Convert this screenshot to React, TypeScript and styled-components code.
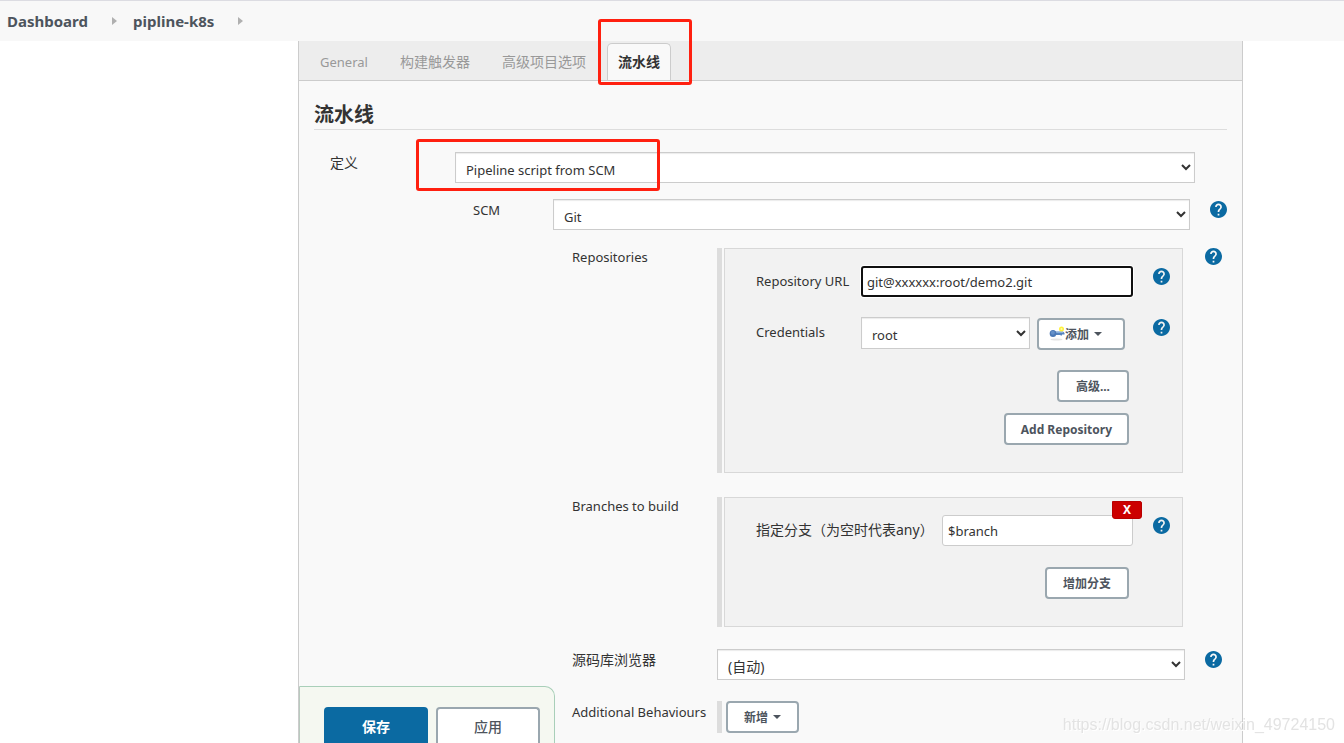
import React from "react";
import styled, { createGlobalStyle } from "styled-components";
import { MdHelp } from "react-icons/md";

const font = `"Noto Sans", "Noto Sans CJK SC", sans-serif`;

const GlobalStyle = createGlobalStyle`
  * { box-sizing: border-box; }
  body {
    margin: 0;
    background: #fff;
    color: #333;
    font: 14px/22px ${font};
  }
  button, input, select { font-family: ${font}; }
`;

const Page = styled.div`
  display: flex;
  flex-direction: column;
  min-height: 100vh;
`;

const Breadcrumbs = styled.nav`
  display: flex;
  align-items: center;
  height: 41px;
  padding-left: 7px;
  border-top: 1px solid #dcdce2;
  background: #f8f8f8;
`;

const Crumb = styled.a`
  color: #4d545d;
  font-size: 15px;
  font-weight: 700;
  text-decoration: none;
`;

const CrumbArrow = styled.svg`
  width: 5px;
  height: 8px;
  margin: 0 16px 0 24px;
  fill: #b0b0b0;
`;

const Panel = styled.main`
  flex: 1;
  margin: 0 101px 0 298px;
  border: solid #ccc;
  border-width: 0 1px;
  background: #f9f9f9;
`;

const TabBar = styled.div`
  display: flex;
  align-items: flex-end;
  gap: 10px;
  height: 40px;
  padding-left: 10px;
  border-bottom: 1px solid #ccc;
  background: #ededed;
`;

const Tab = styled.a<{ $active?: boolean; $latin?: boolean }>`
  position: relative;
  height: 37px;
  padding: 0 10px;
  border: 1px solid ${(p) => (p.$active ? "#ccc" : "transparent")};
  border-bottom: 0;
  border-radius: 5px 5px 0 0;
  background: ${(p) => (p.$active ? "#f9f9f9" : "transparent")};
  color: ${(p) => (p.$active ? "#333" : "#999")};
  font-size: ${(p) => (p.$latin ? 13 : 14)}px;
  font-weight: ${(p) => (p.$active ? 700 : 400)};
  line-height: 36px;
  text-decoration: none;
  white-space: nowrap;
`;

const Marker = styled.span<{ $inset: string }>`
  position: absolute;
  inset: ${(p) => p.$inset};
  border: 3px solid #ff2010;
  border-radius: 3px;
  pointer-events: none;
`;

const Section = styled.section`
  padding: 20px 15px 0;
`;

const Title = styled.h2`
  margin: 0 0 22px;
  border-bottom: 1px solid #ddd;
  font-size: 20px;
  line-height: 28px;
`;

const Group = styled.div<{ $indent: number; $end?: number }>`
  padding-left: ${(p) => p.$indent}px;
  padding-right: ${(p) => p.$end ?? 0}px;
`;

const Row = styled.div<{ $label: number; $help?: number; $space?: number }>`
  display: grid;
  grid-template-columns: ${(p) => p.$label}px minmax(0, 1fr) ${(p) => p.$help ?? 37}px;
  align-items: start;
  margin-bottom: ${(p) => p.$space ?? 0}px;
`;

const Label = styled.label<{ $inner?: boolean; $latin?: boolean }>`
  padding-top: ${(p) => (p.$inner ? 4 : 0)}px;
  font-size: ${(p) => (p.$latin ? 13 : 14)}px;
  white-space: nowrap;
`;

const HelpLink = styled.a`
  display: block;
  justify-self: end;
  width: 17px;
  height: 17px;
  margin-top: 2px;
  color: #0b6aa2;

  svg { display: block; width: 17px; height: 17px; }
`;

const SelectBox = styled.div`
  position: relative;
  display: flex;
`;

const Select = styled.select<{ $latin?: boolean }>`
  flex: 1;
  min-width: 0;
  height: 31px;
  padding: 6px 0 2px 6px;
  border: 1px solid #ccc;
  border-radius: 0;
  background-color: #fff;
  box-shadow: inset 0 1px 1px rgba(0, 0, 0, 0.08);
  color: #333;
  font-size: ${(p) => (p.$latin ? 13 : 14)}px;
`;

const Input = styled.input<{ $focused?: boolean }>`
  width: 100%;
  height: 31px;
  padding: 0 ${(p) => (p.$focused ? 4 : 5)}px;
  border: ${(p) => (p.$focused ? "2px solid #101010" : "1px solid #ccc")};
  border-radius: 3px;
  background: #fff;
  box-shadow: ${(p) => (p.$focused ? "0 0 0 1px #fff" : "none")};
  color: #333;
  font-size: 13px;
  outline: 0;
`;

const Repeatable = styled.div`
  margin: 2px 2px 0 0;
  padding-left: 2px;
  border-left: 5px solid #ddd;
`;

const Box = styled.div<{ $gap?: number }>`
  position: relative;
  display: flex;
  flex-direction: column;
  gap: ${(p) => p.$gap ?? 20}px;
  padding: 17px 12px 27px 31px;
  border: 1px solid #d8d8d8;
  background: #f2f2f2;
`;

const Actions = styled.div`
  display: flex;
  flex-direction: column;
  align-items: flex-end;
  gap: 11px;
  padding-right: 41px;
`;

const Inline = styled.div`
  display: flex;
  align-items: flex-end;
  gap: 7px;
  height: 33px;
  padding-right: 8px;
`;

const InlineSelect = styled(Select)`
  align-self: flex-start;
  height: 32px;
`;

const Button = styled.button<{ $start?: number; $end?: number }>`
  display: flex;
  align-items: center;
  height: 32px;
  padding: 0 ${(p) => p.$end ?? 16}px 0 ${(p) => p.$start ?? 16}px;
  border: 2px solid #9aa7af;
  border-radius: 4px;
  background: #fff;
  color: #4d545d;
  font-size: 12px;
  font-weight: 700;
  white-space: nowrap;
`;

const Caret = styled.svg`
  width: 8px;
  height: 4px;
  margin-left: 5px;
  fill: #4d545d;
`;

const KeyIcon = styled.svg`
  width: 16px;
  height: 16px;
`;

const DeleteButton = styled.button`
  position: absolute;
  top: 3px;
  right: 40px;
  width: 30px;
  height: 18px;
  padding: 0;
  border: 1px solid #b80000;
  border-radius: 0 2px 3px 3px;
  background: #c00;
  color: #fff;
  font-size: 12px;
  font-weight: 700;
  line-height: 16px;
`;

const AddBehaviour = styled.div`
  display: flex;
  padding-left: 4px;
  border-left: 5px solid #ddd;
`;

const SaveBar = styled.div`
  position: fixed;
  bottom: 0;
  left: 299px;
  display: flex;
  gap: 8px;
  height: 57px;
  padding: 20px 14px 0 24px;
  overflow: hidden;
  border: 1px solid #a9cfb9;
  border-bottom: 0;
  border-left-color: #b9c9bf;
  border-radius: 0 10px 0 0;
  background: #f5f8f1;
`;

const SaveButton = styled.button<{ $primary?: boolean }>`
  flex-shrink: 0;
  width: 104px;
  height: 36px;
  border: 2px solid ${(p) => (p.$primary ? "#0b6aa2" : "#9aa7af")};
  border-bottom: 0;
  border-radius: 4px 4px 0 0;
  background: ${(p) => (p.$primary ? "#0b6aa2" : "#fff")};
  color: ${(p) => (p.$primary ? "#fff" : "#4d545d")};
  font-size: 14px;
  font-weight: ${(p) => (p.$primary ? 700 : 500)};
`;

const Watermark = styled.div`
  position: fixed;
  right: 9px;
  bottom: 7px;
  color: #e3e3e3;
  font: 16px/22px "Liberation Sans", sans-serif;
  text-shadow: 1px 1px 0 #fff;
`;

const Arrow = () => (
  <CrumbArrow viewBox="0 0 5 8" aria-hidden>
    <path d="M0 0L5 4L0 8Z" />
  </CrumbArrow>
);

const Down = () => (
  <Caret viewBox="0 0 8 4" aria-hidden>
    <path d="M0 0H8L4 4Z" />
  </Caret>
);

const Help = () => (
  <HelpLink href="#help" aria-label="Help">
    <MdHelp viewBox="2 2 20 20" />
  </HelpLink>
);

const Key = () => (
  <KeyIcon viewBox="0 0 16 16" aria-hidden>
    <ellipse cx="7.5" cy="13.5" rx="6" ry="1" fill="#e4e4e4" />
    <path d="M6 5.500H14L15.500 7V8.500H13V9.500H11.500V9H6Z" fill="#5583bd" />
    <path d="M6 6H14V7H6Z" fill="#88afdc" />
    <ellipse cx="4" cy="7.500" rx="3.300" ry="3.600" fill="#4a78b5" />
    <circle cx="3.800" cy="6.800" r="2" fill="#6590c8" />
    <circle cx="12.500" cy="3" r="2.500" fill="#fff23c" />
    <circle cx="12.500" cy="3" r="1" fill="#fffbb0" />
  </KeyIcon>
);

export default function App() {
  return (
    <Page>
      <GlobalStyle />
      <Breadcrumbs>
        <Crumb href="#dashboard">Dashboard</Crumb>
        <Arrow />
        <Crumb href="#job">pipline-k8s</Crumb>
        <Arrow />
      </Breadcrumbs>
      <Panel>
        <TabBar>
          <Tab href="#general" $latin>General</Tab>
          <Tab href="#triggers">构建触发器</Tab>
          <Tab href="#advanced">高级项目选项</Tab>
          <Tab href="#pipeline" $active>
            流水线
            <Marker $inset="-25px -22px -5px -10px" />
          </Tab>
        </TabBar>
        <Section>
          <Title>流水线</Title>
          <Group $indent={16}>
            <Row $label={125} $help={32} $space={16}>
              <Label htmlFor="definition">定义</Label>
              <SelectBox>
                <Select id="definition" $latin>
                  <option>Pipeline script from SCM</option>
                </Select>
                <Marker $inset="-13px 535px -8px -39px" />
              </SelectBox>
            </Row>
          </Group>
          <Group $indent={159}>
            <Row $label={80} $space={16}>
              <Label htmlFor="scm" $latin>SCM</Label>
              <SelectBox>
                <Select id="scm" $latin>
                  <option>Git</option>
                </Select>
              </SelectBox>
              <Help />
            </Row>
          </Group>
          <Group $indent={258} $end={5}>
            <Row $label={145} $space={22}>
              <Label as="span" $latin>Repositories</Label>
              <Repeatable>
                <Box>
                  <Row $label={105}>
                    <Label htmlFor="url" $inner $latin>Repository URL</Label>
                    <Input id="url" $focused defaultValue="git@xxxxxx:root/demo2.git" />
                    <Help />
                  </Row>
                  <Row $label={105}>
                    <Label htmlFor="credentials" $inner $latin>Credentials</Label>
                    <Inline>
                      <InlineSelect id="credentials" $latin>
                        <option>root</option>
                      </InlineSelect>
                      <Button $start={10} $end={21}>
                        <Key />
                        添加
                        <Down />
                      </Button>
                    </Inline>
                    <Help />
                  </Row>
                  <Actions>
                    <Button $start={17} $end={17}>高级...</Button>
                    <Button $start={15} $end={15}>Add Repository</Button>
                  </Actions>
                </Box>
              </Repeatable>
              <Help />
            </Row>
            <Row $label={145} $space={22}>
              <Label as="span" $latin>Branches to build</Label>
              <Repeatable>
                <Box $gap={21}>
                  <Row $label={186}>
                    <Label htmlFor="branch" $inner>指定分支（为空时代表any）</Label>
                    <Input id="branch" defaultValue="$branch" />
                    <Help />
                  </Row>
                  <Actions>
                    <Button>增加分支</Button>
                  </Actions>
                  <DeleteButton aria-label="X">X</DeleteButton>
                </Box>
              </Repeatable>
            </Row>
            <Row $label={145} $space={21}>
              <Label htmlFor="browser">源码库浏览器</Label>
              <SelectBox>
                <Select id="browser">
                  <option>(自动)</option>
                </Select>
              </SelectBox>
              <Help />
            </Row>
            <Row $label={145}>
              <Label as="span" $latin>Additional Behaviours</Label>
              <AddBehaviour>
                <Button>
                  新增
                  <Down />
                </Button>
              </AddBehaviour>
            </Row>
          </Group>
        </Section>
      </Panel>
      <SaveBar>
        <SaveButton $primary>保存</SaveButton>
        <SaveButton>应用</SaveButton>
      </SaveBar>
      <Watermark>https://blog.csdn.net/weixin_49724150</Watermark>
    </Page>
  );
}
